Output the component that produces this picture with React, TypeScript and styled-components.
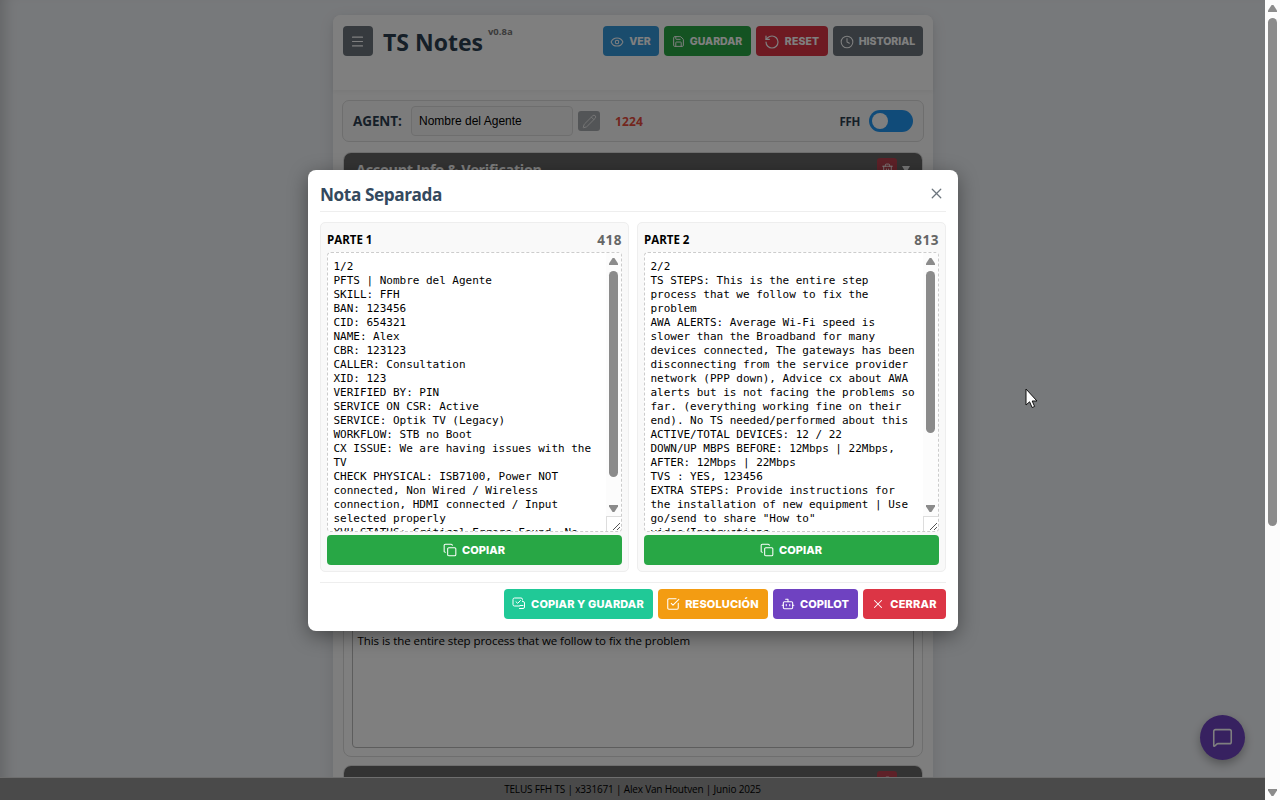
import React from "react";
import styled, { createGlobalStyle } from "styled-components";
import { Menu, Eye, Save, RotateCcw, Clock, Pencil, Trash2, Copy, Bot, X, MessageSquare, SquareCheckBig } from "lucide-react";

const Global = createGlobalStyle`
  * { box-sizing: border-box; }
  body { margin: 0; overflow: hidden; font-family: "Open Sans", "Noto Sans", sans-serif; }
`;

const Screen = styled.div`
  position: relative;
  display: flex;
  width: 1280px;
  height: 800px;
  overflow: hidden;
`;
const Page = styled.div`
  position: relative;
  display: flex;
  flex-direction: column;
  width: 1265px;
  height: 800px;
  background: #eff2f6;
  box-shadow: inset 14px 0 14px -10px rgba(0, 0, 0, 0.18);
`;
const Main = styled.main`
  height: 777px;
  padding-top: 15px;
  display: flex;
  justify-content: center;
  padding-left: 1px;
  overflow: hidden;
`;
const Container = styled.div`
  width: 600px;
  height: 800px;
  flex: none;
  background: #fdfdfd;
  border-radius: 8px;
  box-shadow: 0 4px 15px rgba(0, 0, 0, 0.1);
`;
const Header = styled.header`
  display: flex;
  height: 75px;
  padding: 11px 10px 0;
  background: #fff;
  border-radius: 8px 8px 0 0;
  box-shadow: 0 2px 5px rgba(0, 0, 0, 0.05);
`;
const MenuButton = styled.button`
  width: 30px;
  height: 30px;
  padding: 0 1px 0 0;
  border: 0;
  border-radius: 4px;
  background: #6c757d;
  color: #fff;
  display: grid;
  place-items: center;
`;
const Brand = styled.h1`
  margin: 0 0 0 10px;
  font-size: 23px;
  line-height: 32px;
  letter-spacing: 0;
  font-weight: 700;
  color: #2c3e50;
`;
const Version = styled.span`
  margin: -1px 0 0 5px;
  font-size: 9.5px;
  line-height: 14px;
  font-weight: 700;
  color: #777;
`;
const HeaderActions = styled.div`
  display: flex;
  gap: 5px;
  margin-left: auto;
`;
const Button = styled.button<{ $bg: string; $w: number; $size?: number; $track?: number }>`
  display: flex;
  align-items: center;
  justify-content: center;
  gap: 5px;
  width: ${(p) => p.$w}px;
  height: 30px;
  padding: 0 1px 0 0;
  border: 0;
  border-radius: 4px;
  background: ${(p) => p.$bg};
  color: #fff;
  font: 800 ${(p) => p.$size ?? 10.5}px/14px Inter, sans-serif;
  letter-spacing: ${(p) => p.$track ?? 0}px;
  white-space: nowrap;
  svg { flex: none; }
`;
const HeaderButton = styled(Button)`
  padding-top: 1px;
`;
const AgentBar = styled.div`
  display: flex;
  align-items: center;
  height: 42px;
  margin: 10px 9px 10px;
  padding: 0 10px 0 9px;
  border: 1px solid #dcdcdc;
  border-radius: 7px;
  background: #f9f9f9;
`;
const AgentLabel = styled.label`
  width: 59px;
  padding-left: 1px;
  font-size: 13.5px;
  font-weight: 700;
  letter-spacing: -0.1px;
  color: #2c3e50;
`;
const AgentInput = styled.div`
  width: 162px;
  height: 30px;
  padding: 0 7px;
  border: 1px solid #ddd;
  border-radius: 4px;
  font: 12px/28px "Liberation Sans", sans-serif;
  background: #f5f5f5;
  color: #000;
`;
const EditButton = styled.button`
  display: grid;
  place-items: center;
  width: 22px;
  height: 20px;
  margin-left: 5px;
  padding: 0;
  border: 0;
  border-radius: 3px;
  background: #a6aaae;
  color: #eee;
`;
const Count = styled.span`
  margin-left: 15px;
  font-size: 12px;
  font-weight: 700;
  letter-spacing: 0.1px;
  color: #e74c3c;
`;
const Skill = styled.span`
  margin-left: auto;
  font-size: 11.5px;
  font-weight: 700;
  letter-spacing: -0.3px;
  color: #2c3e50;
`;
const Toggle = styled.div`
  width: 44px;
  height: 22px;
  margin-left: 9px;
  padding: 3px;
  border-radius: 11px;
  background: #2196f3;
`;
const Knob = styled.div`
  width: 16px;
  height: 16px;
  border-radius: 50%;
  background: #fff;
`;
const Section = styled.section<{ $h: number }>`
  height: ${(p) => p.$h}px;
  margin: 0 10px 8px;
  border: 1px solid #ddd;
  border-radius: 8px;
  overflow: hidden;
  display: flex;
  flex-direction: column;
  background: #fff;
`;
const SectionHeader = styled.div`
  display: flex;
  height: 34px;
  flex: none;
  padding: 5px 12px 0 12px;
  background: #666;
  color: #fff;
  font-size: 14.4px;
  letter-spacing: -0.28px;
  line-height: 23px;
  font-weight: 700;
`;
const TrashButton = styled.button`
  display: grid;
  place-items: center;
  width: 20px;
  height: 20px;
  margin-left: auto;
  padding: 2px 0 0;
  border: 0;
  border-radius: 3px;
  background: #bd4350;
  color: #fff;
`;
const Caret = styled.span`
  width: 8px;
  height: 7px;
  margin: 8px 0 0 5px;
  background: #eee;
  clip-path: polygon(0 0, 100% 0, 50% 100%);
`;
const Steps = styled.div`
  flex: 1;
  margin: 8px;
  padding: 180px 5px 0 4.5px;
  border: 1px solid #bbb;
  border-radius: 4px;
  font-size: 11.5px;
  line-height: 16px;
  letter-spacing: -0.06px;
  color: #000;
`;
const Footer = styled.footer`
  height: 23px;
  border-top: 1px solid #ddd;
  background: #949494;
  color: #000;
  text-align: center;
  font-size: 10px;
  line-height: 23px;
  letter-spacing: -0.17px;
`;
const Fab = styled.button`
  position: absolute;
  left: 1200px;
  top: 715px;
  display: grid;
  place-items: center;
  width: 45px;
  height: 45px;
  padding: 0;
  border: 0;
  border-radius: 50%;
  background: #6f42c1;
  color: #fff;
  box-shadow: 0 4px 10px rgba(0, 0, 0, 0.3);
`;
const Overlay = styled.div`
  position: absolute;
  inset: 0;
  display: flex;
  align-items: center;
  justify-content: center;
  padding: 1px 0 0 1px;
  background: rgba(0, 0, 0, 0.5);
`;
const Modal = styled.div`
  width: 650px;
  height: 461px;
  padding: 12px;
  border-radius: 8px;
  background: #fff;
  box-shadow: 0 5px 20px rgba(0, 0, 0, 0.4);
`;
const ModalHeader = styled.div`
  display: flex;
  justify-content: space-between;
  height: 30px;
  border-bottom: 1px solid #eee;
  svg { margin: 3px 1.5px 0 0; color: #6c757d; }
`;
const ModalTitle = styled.h2`
  margin: 0;
  font-size: 17.2px;
  line-height: 25px;
  font-weight: 700;
  letter-spacing: -0.4px;
  color: #34495e;
`;
const Columns = styled.div`
  display: flex;
  gap: 8px;
  margin-top: 10px;
`;
const Part = styled.div`
  width: 309px;
  height: 350px;
  padding: 6px;
  border: 1px solid #eee;
  border-radius: 5px;
  background: #f9f9f9;
`;
const PartHeader = styled.div`
  display: flex;
  justify-content: space-between;
  height: 23px;
  font-size: 11.5px;
  line-height: 22px;
  font-weight: 700;
  color: #000;
`;
const CharCount = styled.span`
  font-size: 13.5px;
  color: #666;
  letter-spacing: 0.5px;
`;
const NoteBox = styled.div`
  display: flex;
  width: 295px;
  height: 280px;
  margin-bottom: 3px;
  border: 1px dashed #ccc;
  border-radius: 4px;
  overflow: hidden;
  background: #fff;
`;
const NoteText = styled.pre`
  flex: 1;
  margin: 0;
  padding: 7px 0 0 5.5px;
  height: 278px;
  overflow: hidden;
  font: 11px/14px "DejaVu Sans Mono", monospace;
  letter-spacing: -0.02px;
  color: #000;
`;
const Track = styled.div`
  display: flex;
  flex-direction: column;
  align-items: center;
  flex: none;
  width: 15px;
  background: #fcfcfc;
`;
const Arrow = styled.span<{ $down?: boolean }>`
  flex: none;
  width: 9px;
  height: 7px;
  background: #8b8b8b;
  clip-path: ${(p) => (p.$down ? "polygon(0 0, 100% 0, 100% 20%, 60% 100%, 40% 100%, 0 20%)" : "polygon(40% 0, 60% 0, 100% 80%, 100% 100%, 0 100%, 0 80%)")};
`;
const Thumb = styled.span<{ $h: number; $before: number }>`
  flex: none;
  width: 9px;
  height: ${(p) => p.$h}px;
  margin: ${(p) => p.$before}px 0 auto;
  border-radius: 4.5px;
  background: #8b8b8b;
`;
const NoteTrack = styled(Track)`padding-top: 5px;`;
const PageTrack = styled(Track)`height: 800px; padding: 5px 0 4px;`;
const Grip = styled.span`
  flex: none;
  width: 15px;
  height: 15px;
  margin-top: 4px;
  border-top: 1px solid #ddd;
  border-left: 1px solid #ddd;
  background: #fff;
  svg { display: block; }
`;
const ModalFooter = styled.div`
  display: flex;
  justify-content: flex-end;
  gap: 5px;
  margin-top: 10px;
  padding-top: 6px;
  border-top: 1px solid #eee;
`;
const Pointer = styled.svg`
  position: absolute;
  left: 1025px;
  top: 388px;
`;

const CopySaveIcon = () => (
  <svg width="14" height="14" viewBox="0 0 14 14" fill="none" stroke="currentColor" strokeWidth="1" strokeLinecap="round" strokeLinejoin="round">
    <path d="M10.500 3V2.500A1.500 1.500 0 0 0 9 1H2.500A1.500 1.500 0 0 0 1 2.500V7.500A1.500 1.500 0 0 0 2.500 9H7.500" />
    <path d="M4 4.800l1.700 1.500L8.500 3.500M10.500 4.500h.5A1.500 1.500 0 0 1 12.500 6v4A1.500 1.500 0 0 1 11 11.500H7.500M8 8.500h3" />
  </svg>
);

const noteOne = `1/2
PFTS | Nombre del Agente
SKILL: FFH
BAN: 123456
CID: 654321
NAME: Alex
CBR: 123123
CALLER: Consultation
XID: 123
VERIFIED BY: PIN
SERVICE ON CSR: Active
SERVICE: Optik TV (Legacy)
WORKFLOW: STB no Boot
CX ISSUE: We are having issues with the
TV
CHECK PHYSICAL: ISB7100, Power NOT
connected, Non Wired / Wireless
connection, HDMI connected / Input
selected properly
XVU STATUS: Critical Errors Found, No`;

const noteTwo = `2/2
TS STEPS: This is the entire step
process that we follow to fix the
problem
AWA ALERTS: Average Wi-Fi speed is
slower than the Broadband for many
devices connected, The gateways has been
disconnecting from the service provider
network (PPP down), Advice cx about AWA
alerts but is not facing the problems so
far. (everything working fine on their
end). No TS needed/performed about this
ACTIVE/TOTAL DEVICES: 12 / 22
DOWN/UP MBPS BEFORE: 12Mbps | 22Mbps,
AFTER: 12Mbps | 22Mbps
TVS : YES, 123456
EXTRA STEPS: Provide instructions for
the installation of new equipment | Use
go/send to share "How to"
video/Instructions`;

interface NotePartProps { title: string; count: number; text: string; thumb: number }

const NotePart = ({ title, count, text, thumb }: NotePartProps) => (
  <Part>
    <PartHeader><span>{title}</span><CharCount>{count}</CharCount></PartHeader>
    <NoteBox>
      <NoteText>{text}</NoteText>
      <NoteTrack>
        <Arrow />
        <Thumb $h={thumb} $before={6} />
        <Arrow $down />
        <Grip>
          <svg width="14" height="14" viewBox="0 0 14 14" stroke="#555" strokeWidth="1"><path d="M6 13l7-7M10 13l3-3" /></svg>
        </Grip>
      </NoteTrack>
    </NoteBox>
    <Button $bg="#28a745" $w={295} $size={11} $track={0.05}><Copy size={14} strokeWidth={1.8} />COPIAR</Button>
  </Part>
);

export default function App() {
  return (
    <Screen>
      <Global />
      <Page>
        <Main>
          <Container>
            <Header>
              <MenuButton><Menu size={15} strokeWidth={1.8} /></MenuButton>
              <Brand>TS Notes</Brand>
              <Version>v0.8a</Version>
              <HeaderActions>
                <HeaderButton $bg="#3498db" $w={56}><Eye size={14} strokeWidth={1.8} />VER</HeaderButton>
                <HeaderButton $bg="#28a745" $w={87}><Save size={13} strokeWidth={1.8} />GUARDAR</HeaderButton>
                <HeaderButton $bg="#dc3545" $w={72} $track={0.1}><RotateCcw size={16} strokeWidth={1.8} />RESET</HeaderButton>
                <HeaderButton $bg="#6c757d" $w={90}><Clock size={14} strokeWidth={1.8} />HISTORIAL</HeaderButton>
              </HeaderActions>
            </Header>
            <AgentBar>
              <AgentLabel>AGENT:</AgentLabel>
              <AgentInput>Nombre del Agente</AgentInput>
              <EditButton><Pencil size={15} strokeWidth={1.5} /></EditButton>
              <Count>1224</Count>
              <Skill>FFH</Skill>
              <Toggle><Knob /></Toggle>
            </AgentBar>
            <Section $h={249}>
              <SectionHeader>Account Info &amp; Verification<TrashButton><Trash2 size={13} strokeWidth={1.6} /></TrashButton><Caret /></SectionHeader>
            </Section>
            <Section $h={348}>
              <SectionHeader />
              <Steps>This is the entire step process that we follow to fix the problem</Steps>
            </Section>
            <Section $h={60}>
              <SectionHeader><TrashButton><Trash2 size={13} strokeWidth={1.6} /></TrashButton><Caret /></SectionHeader>
            </Section>
          </Container>
        </Main>
        <Footer>TELUS FFH TS | x331671 | Alex Van Houtven | Junio 2025</Footer>
        <Fab><MessageSquare size={21} strokeWidth={1.8} /></Fab>
        <Overlay>
          <Modal>
            <ModalHeader><ModalTitle>Nota Separada</ModalTitle><X size={17} strokeWidth={1.8} /></ModalHeader>
            <Columns>
              <NotePart title="PARTE 1" count={418} text={noteOne} thumb={206} />
              <NotePart title="PARTE 2" count={813} text={noteTwo} thumb={162} />
            </Columns>
            <ModalFooter>
              <Button $bg="#20c997" $w={149} $size={11} $track={0.12}><CopySaveIcon />COPIAR Y GUARDAR</Button>
              <Button $bg="#f39c12" $w={110} $size={11} $track={0.15}><SquareCheckBig size={14} strokeWidth={1.8} />RESOLUCIÓN</Button>
              <Button $bg="#6f42c1" $w={85} $size={11} $track={0.05}><Bot size={14} strokeWidth={1.8} />COPILOT</Button>
              <Button $bg="#dc3545" $w={83} $size={11} $track={0.2}><X size={14} strokeWidth={1.8} />CERRAR</Button>
            </ModalFooter>
          </Modal>
        </Overlay>
        <Pointer width="14" height="22" viewBox="0 0 14 22"><path d="M1 1v16l3.600-3.200 2.500 5.700 2.500-1-2.400-5.500H12z" fill="#fff" stroke="#111" strokeWidth="1" /></Pointer>
      </Page>
      <PageTrack>
        <Arrow />
        <Thumb $h={508} $before={6} />
        <Arrow $down />
      </PageTrack>
    </Screen>
  );
}
